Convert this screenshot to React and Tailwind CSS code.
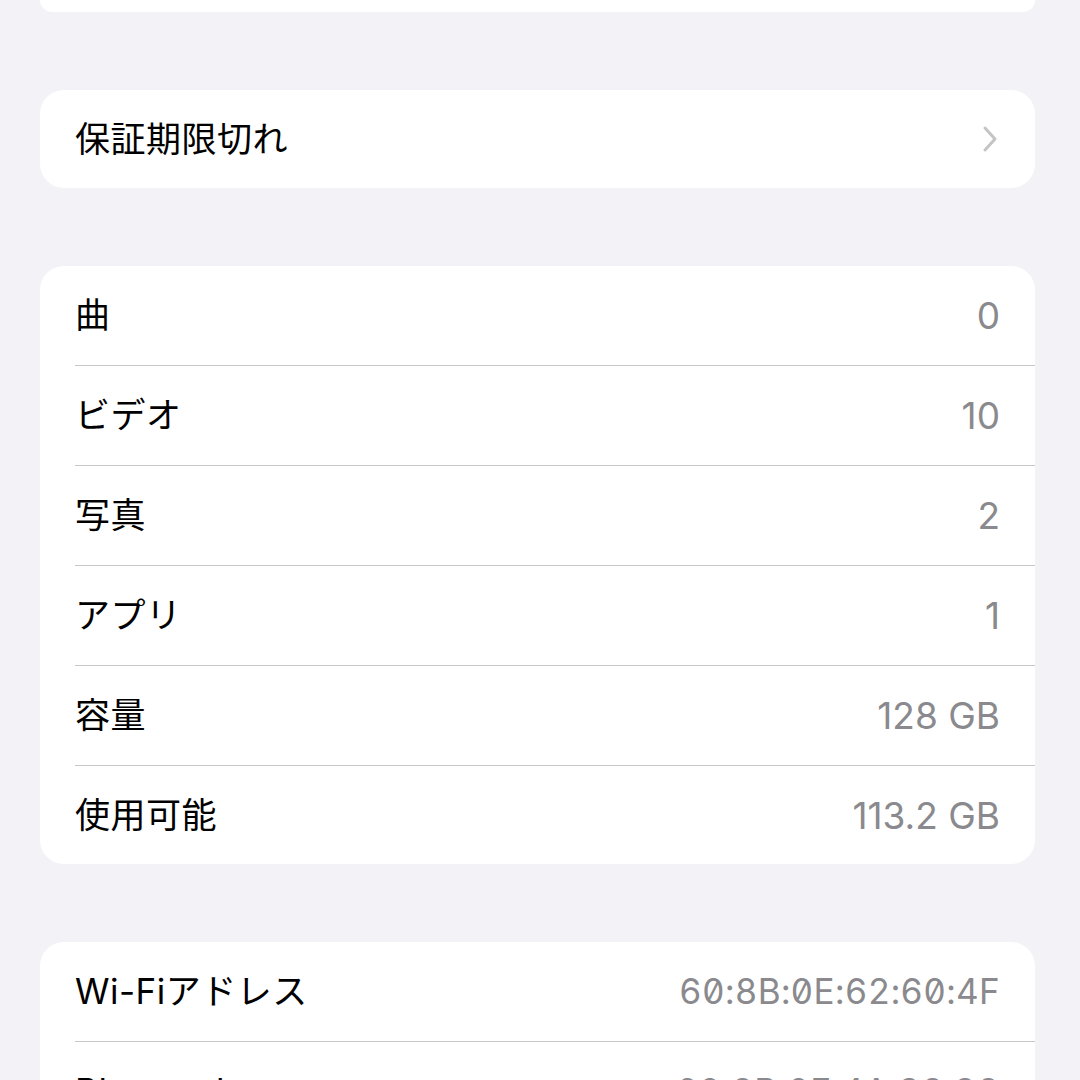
import React from 'react';

const stats = [
  { label: '曲', value: '0' },
  { label: 'ビデオ', value: '10' },
  { label: '写真', value: '2' },
  { label: 'アプリ', value: '1' },
  { label: '容量', value: '128 GB' },
  { label: '使用可能', value: '113.2 GB' },
];

const network = [
  { label: 'Wi-Fiアドレス', value: '60:8B:0E:62:60:4F' },
  { label: 'Bluetooth', value: '60:8B:0E:4A:38:38' },
];

function Row({ label, value, mono, last, chevron }) {
  return (
    <div className="pl-[35px]">
      <div className={'flex items-center justify-between pr-[35px] ' + (last ? 'h-[98px]' : 'h-[100px] border-b border-[#c8c8cb]')}>
        <span className="text-black tracking-[0.5px]">{label}</span>
        {chevron ? (
          <svg width="16" height="28" viewBox="0 0 16 28" fill="none" className="mr-[2px]">
            <path d="M3 3 L13 14 L3 25" stroke="#c4c4c7" strokeWidth="3" strokeLinecap="round" strokeLinejoin="round" />
          </svg>
        ) : mono ? (
          <span className="text-[#8a8a8e] slashed-zero tabular-nums tracking-[0.3px]">{value}</span>
        ) : (
          <span className="text-[#8a8a8e] text-[37px]">{value}</span>
        )}
      </div>
    </div>
  );
}

export default function App() {
  return (
    <div
      className="w-[1080px] h-[1080px] overflow-hidden bg-[#f2f2f7] text-[35px] leading-none"
      style={{ fontFamily: 'Inter, "Noto Sans CJK JP", sans-serif' }}
    >
      <div className="ml-[40px] w-[995px] flex flex-col gap-[78px]">
        <div className="h-[12px] bg-white rounded-b-[24px]" />

        <div className="bg-white rounded-[24px] overflow-hidden">
          <Row label="保証期限切れ" chevron last />
        </div>

        <div className="bg-white rounded-[24px] overflow-hidden">
          {stats.map((s, i) => (
            <Row key={s.label} label={s.label} value={s.value} last={i === stats.length - 1} />
          ))}
        </div>

        <div className="bg-white rounded-[24px] overflow-hidden">
          {network.map((n, i) => (
            <Row key={n.label} label={n.label} value={n.value} mono last={i === network.length - 1} />
          ))}
        </div>
      </div>
    </div>
  );
}
